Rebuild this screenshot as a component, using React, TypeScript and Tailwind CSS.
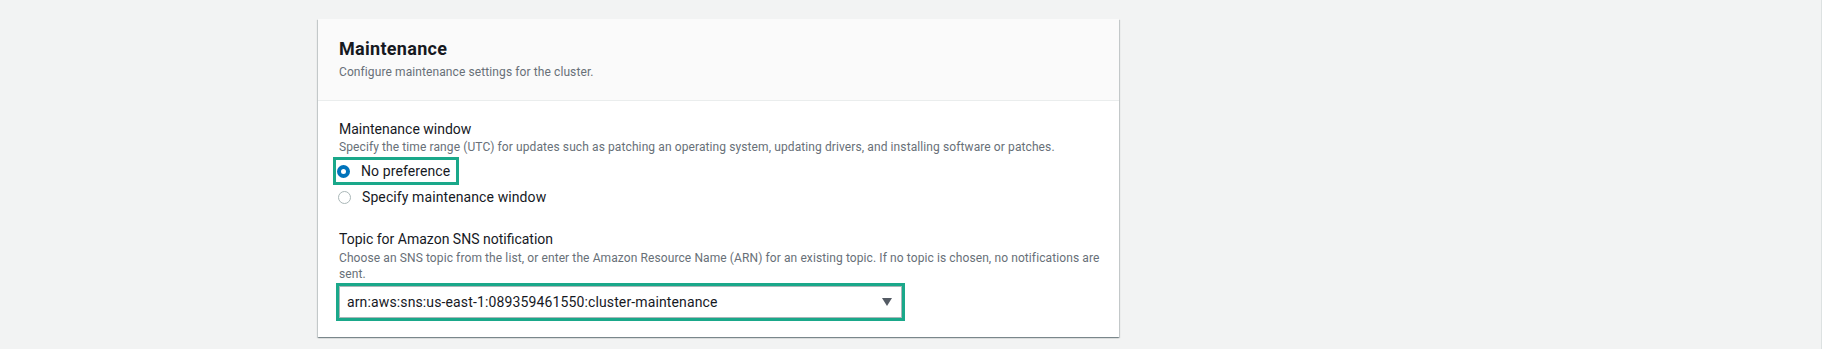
import { useState } from "react";

const options = [
  { id: "none", label: "No preference" },
  { id: "custom", label: "Specify maintenance window" },
];

function Radio({ checked }: { checked: boolean }) {
  return checked ? (
    <span className="w-[13px] h-[13px] rounded-full border-[4px] border-[#0073bb] bg-white shrink-0" />
  ) : (
    <span className="w-[13px] h-[13px] rounded-full border border-[#aab7b8] bg-white shrink-0" />
  );
}

export default function App() {
  const [choice, setChoice] = useState("none");

  return (
    <div className="w-[1822px] h-[349px] bg-[#f2f3f3] border-r border-[#dde2e2] font-[Roboto,sans-serif] pl-[318px] pt-[19px]">
      <div className="w-[801px] bg-white shadow-[0_1px_1px_0_rgba(0,28,36,0.3),1px_1px_1px_0_rgba(0,28,36,0.15),-1px_1px_1px_0_rgba(0,28,36,0.15)]">
        {/* header */}
        <div className="bg-[#fafafa] border-b border-[#eaeded] pl-[21px] pr-5 pt-[19px] pb-[20px]">
          <h2 className="text-[18px] leading-[22px] font-bold tracking-[0.3px] text-[#16191f]">
            Maintenance
          </h2>
          <p className="mt-[4px] text-[12px] leading-[16px] tracking-[0.1px] text-[#687078]">
            Configure maintenance settings for the cluster.
          </p>
        </div>

        {/* body */}
        <div className="pl-[21px] pr-[18px] pt-[18px] pb-[16px]">
          <div className="text-[14px] leading-[20px] text-[#16191f]">
            Maintenance window
          </div>
          <p className="text-[12px] leading-[16px] tracking-[0.1px] text-[#687078]">
            Specify the time range (UTC) for updates such as patching an
            operating system, updating drivers, and installing software or
            patches.
          </p>

          <div className="mt-[2px] flex flex-col items-start">
            {options.map((o, i) =>
              i === 0 ? (
                <button
                  key={o.id}
                  onClick={() => setChoice(o.id)}
                  className="ml-[-6px] h-[28px] flex items-center gap-[11px] border-[3px] border-[#1aa88a] pl-[1px] pr-[6px]"
                >
                  <Radio checked={choice === o.id} />
                  <span className="text-[14px] leading-[20px] tracking-[0.1px] text-[#16191f]">
                    {o.label}
                  </span>
                </button>
              ) : (
                <button
                  key={o.id}
                  onClick={() => setChoice(o.id)}
                  className="ml-[-1px] h-[24px] flex items-center gap-[11px]"
                >
                  <Radio checked={choice === o.id} />
                  <span className="text-[14px] leading-[20px] tracking-[0.1px] text-[#16191f]">
                    {o.label}
                  </span>
                </button>
              )
            )}
          </div>

          <div className="mt-[20px] text-[14px] leading-[20px] text-[#16191f]">
            Topic for Amazon SNS notification
          </div>
          <p className="mt-[1px] text-[12px] leading-[16px] tracking-[0.1px] text-[#687078]">
            Choose an SNS topic from the list, or enter the Amazon Resource Name
            (ARN) for an existing topic. If no topic is chosen, no notifications
            are sent.
          </p>

          <div className="mt-[1px] ml-[-3px] w-fit border-[3px] border-[#1aa88a]">
            <div className="w-[563px] h-[32px] border border-[#aab7b8] bg-white flex items-center justify-between pl-[7px] pr-[9px]">
              <span className="text-[14px] tracking-[0.13px] text-[#16191f]">
                arn:aws:sns:us-east-1:089359461550:cluster-maintenance
              </span>
              <svg width="10" height="8" viewBox="0 0 10 8">
                <path d="M0 0h10L5 8z" fill="#545b64" />
              </svg>
            </div>
          </div>
        </div>
      </div>
    </div>
  );
}
